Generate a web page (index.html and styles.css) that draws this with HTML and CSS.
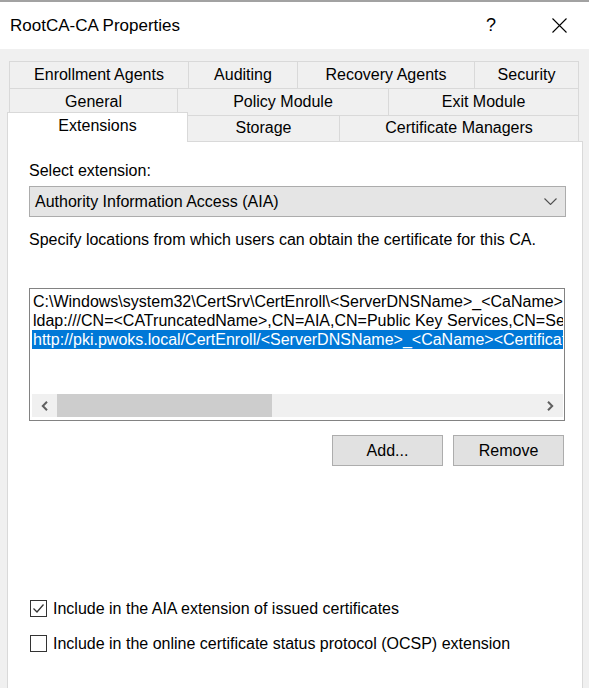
FILE: index.html
```html
<!DOCTYPE html>
<html>
<head>
<meta charset="utf-8">
<title>RootCA-CA Properties</title>
<link rel="stylesheet" href="styles.css">
</head>
<body>
<div class="topstrip"></div>
<div class="titlebar">
  <div class="title">RootCA-CA Properties</div>
  <div class="help">?</div>
  <div class="close">
    <svg width="15" height="15" viewBox="0 0 15 15"><path d="M0.5 0.5L14.5 14.5M14.5 0.5L0.5 14.5" stroke="#000" stroke-width="1.1" fill="none"/></svg>
  </div>
</div>
<div class="tabs">
  <div class="tabrow">
    <div class="tab w-enroll">Enrollment Agents</div>
    <div class="tab w-audit">Auditing</div>
    <div class="tab w-recov">Recovery Agents</div>
    <div class="tab w-sec">Security</div>
  </div>
  <div class="tabrow">
    <div class="tab w-gen">General</div>
    <div class="tab w-policy">Policy Module</div>
    <div class="tab w-exit">Exit Module</div>
  </div>
  <div class="tabrow front">
    <div class="tab sel w-ext">Extensions</div>
    <div class="tab w-stor">Storage</div>
    <div class="tab w-mgr">Certificate Managers</div>
  </div>
</div>
<div class="panel">
  <div class="content">
    <div class="label">Select extension:</div>
    <div class="select">
      <span class="select-text">Authority Information Access (AIA)</span>
      <svg class="chev" width="13" height="7" viewBox="0 0 13 7"><path d="M0.5 0.5L6.5 6.5L12.5 0.5" stroke="#505050" stroke-width="1.1" fill="none"/></svg>
    </div>
    <div class="desc">Specify locations from which users can obtain the certificate for this CA.</div>
    <div class="listbox">
      <div class="rows">
        <div class="row">C:\Windows\system32\CertSrv\CertEnroll\&lt;ServerDNSName&gt;_&lt;CaName&gt;&lt;CertificateName&gt;.crt</div>
        <div class="row">ldap:///CN=&lt;CATruncatedName&gt;,CN=AIA,CN=Public Key Services,CN=Services,&lt;ConfigurationContainer&gt;&lt;CAObjectClass&gt;</div>
        <div class="row sel">http://pki.pwoks.local/CertEnroll/&lt;ServerDNSName&gt;_&lt;CaName&gt;&lt;CertificateName&gt;.crt</div>
      </div>
      <div class="hscroll">
        <div class="arrow"><svg width="7" height="10" viewBox="0 0 7 10"><path d="M6 0.8L1.8 5L6 9.2" stroke="#606060" stroke-width="2" fill="none"/></svg></div>
        <div class="thumb"></div>
        <div class="track"></div>
        <div class="arrow"><svg width="7" height="10" viewBox="0 0 7 10"><path d="M1 0.8L5.2 5L1 9.2" stroke="#606060" stroke-width="2" fill="none"/></svg></div>
      </div>
    </div>
    <div class="btnrow">
      <div class="btn">Add...</div>
      <div class="btn">Remove</div>
    </div>
    <div class="checks">
      <div class="check">
        <div class="box"><svg width="15" height="15" viewBox="0 0 15 15"><path d="M2.5 7.5L6 11L12.5 3.5" stroke="#333" stroke-width="1.3" fill="none"/></svg></div>
        <span>Include in the AIA extension of issued certificates</span>
      </div>
      <div class="check">
        <div class="box"></div>
        <span>Include in the online certificate status protocol (OCSP) extension</span>
      </div>
    </div>
  </div>
</div>
</body>
</html>
```

FILE: styles.css
```css
html, body {
  margin: 0;
  padding: 0;
}
body {
  width: 589px;
  height: 688px;
  overflow: hidden;
  background: #f0f0f0;
  font-family: "Liberation Sans", Arial, sans-serif;
  font-size: 16px;
  color: #000;
}
.topstrip {
  height: 2px;
  background: #a2a2a2;
}
.titlebar {
  height: 47px;
  background: #fff;
  display: flex;
  align-items: center;
}
.title {
  flex: 1;
  margin-left: 10px;
  font-size: 17px;
}
.help {
  font-size: 18px;
  width: 10px;
  text-align: center;
}
.close {
  margin-left: 56px;
  margin-right: 22px;
  display: flex;
}
.tabs {
  padding-top: 12px;
}
.tabrow {
  display: flex;
  height: 27px;
  margin-left: 9px;
}
.tabrow.front {
  margin-left: 7px;
  height: 26px;
  align-items: flex-start;
}
.tab {
  box-sizing: border-box;
  height: 27px;
  border: 1px solid #d9d9d9;
  border-bottom: none;
  margin-left: -1px;
  display: flex;
  align-items: center;
  justify-content: center;
  padding-bottom: 1px;
  white-space: nowrap;
}
.tab:first-child {
  margin-left: 0;
}
.front .tab {
  height: 26px;
}
.front .tab.sel {
  height: 30px;
  margin-top: -3px;
  background: #fff;
  position: relative;
  z-index: 1;
  padding-bottom: 3px;
}
.w-enroll { width: 180px; }
.w-audit { width: 110px; }
.w-recov { width: 178px; }
.w-sec { width: 105px; }
.w-gen { width: 169px; }
.w-policy { width: 212px; }
.w-exit { width: 191px; }
.w-ext { width: 181px; }
.w-stor { width: 153px; }
.w-mgr { width: 240px; }
.panel {
  box-sizing: border-box;
  margin-left: 7px;
  width: 576px;
  height: 560px;
  border: 1px solid #d9d9d9;
  background: #fff;
  padding: 19px 0 0 21px;
}
.content {
  width: 537px;
}
.label {
  line-height: 19px;
}
.select {
  margin-top: 6px;
  box-sizing: border-box;
  height: 31px;
  border: 1px solid #acacac;
  background: #e5e5e5;
  display: flex;
  align-items: center;
  padding-left: 5px;
  padding-right: 8px;
}
.select-text {
  flex: 1;
}
.desc {
  margin-top: 13px;
  line-height: 19px;
}
.listbox {
  margin-top: 39px;
  box-sizing: border-box;
  width: 536px;
  height: 133px;
  border: 1px solid #828282;
  padding: 3px 1px 3px 2px;
  display: flex;
  flex-direction: column;
  background: #fff;
}
.rows {
  height: 102px;
  overflow: hidden;
}
.row {
  height: 19px;
  line-height: 19px;
  white-space: nowrap;
  overflow: hidden;
  padding-left: 1px;
}
.row.sel {
  background: #0078d7;
  color: #fff;
}
.hscroll {
  height: 23px;
  display: flex;
  background: #f0f0f0;
}
.arrow {
  width: 25px;
  display: flex;
  align-items: center;
  justify-content: center;
}
.thumb {
  width: 215px;
  background: #cdcdcd;
}
.track {
  flex: 1;
}
.btnrow {
  margin-top: 14px;
  display: flex;
  justify-content: flex-end;
  gap: 10px;
  padding-right: 2px;
}
.btn {
  box-sizing: border-box;
  width: 111px;
  height: 31px;
  background: #e1e1e1;
  border: 1px solid #adadad;
  display: flex;
  align-items: center;
  justify-content: center;
}
.checks {
  margin-top: 133px;
  display: flex;
  flex-direction: column;
  gap: 16px;
}
.check {
  display: flex;
  align-items: center;
  height: 19px;
  line-height: 19px;
  margin-left: 1px;
}
.box {
  box-sizing: border-box;
  width: 17px;
  height: 17px;
  border: 1px solid #333;
  background: #fff;
  margin-right: 6px;
  display: flex;
}
```
